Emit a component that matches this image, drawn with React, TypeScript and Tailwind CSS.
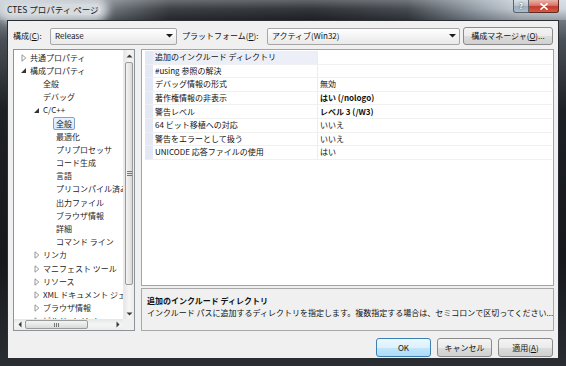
import React from 'react';

type TreeNode = {
  label: string;
  level: number;
  arrow?: 'open' | 'closed';
  selected?: boolean;
};

const treeNodes: TreeNode[] = [
  { label: '共通プロパティ', level: 0, arrow: 'closed' },
  { label: '構成プロパティ', level: 0, arrow: 'open' },
  { label: '全般', level: 1 },
  { label: 'デバッグ', level: 1 },
  { label: 'C/C++', level: 1, arrow: 'open' },
  { label: '全般', level: 2, selected: true },
  { label: '最適化', level: 2 },
  { label: 'プリプロセッサ', level: 2 },
  { label: 'コード生成', level: 2 },
  { label: '言語', level: 2 },
  { label: 'プリコンパイル済みヘッダー', level: 2 },
  { label: '出力ファイル', level: 2 },
  { label: 'ブラウザ情報', level: 2 },
  { label: '詳細', level: 2 },
  { label: 'コマンド ライン', level: 2 },
  { label: 'リンカ', level: 1, arrow: 'closed' },
  { label: 'マニフェスト ツール', level: 1, arrow: 'closed' },
  { label: 'リソース', level: 1, arrow: 'closed' },
  { label: 'XML ドキュメント ジェネレーター', level: 1, arrow: 'closed' },
  { label: 'ブラウザ情報', level: 1, arrow: 'closed' },
  { label: 'ビルド イベント', level: 1, arrow: 'closed' },
];

type PropRow = { name: string; value: string; bold?: boolean; active?: boolean };

const propRows: PropRow[] = [
  { name: '追加のインクルード ディレクトリ', value: '', active: true },
  { name: '#using 参照の解決', value: '' },
  { name: 'デバッグ情報の形式', value: '無効' },
  { name: '著作権情報の非表示', value: 'はい (/nologo)', bold: true },
  { name: '警告レベル', value: 'レベル 3 (/W3)', bold: true },
  { name: '64 ビット移植への対応', value: 'いいえ' },
  { name: '警告をエラーとして扱う', value: 'いいえ' },
  { name: 'UNICODE 応答ファイルの使用', value: 'はい' },
];

const levelPad = ['pl-[3px]', 'pl-[16px]', 'pl-[29px]'];

const TreeArrow: React.FC<{ kind?: 'open' | 'closed' }> = ({ kind }) => (
  <span className="w-[13px] h-full flex items-center justify-center shrink-0">
    {kind === 'closed' && (
      <svg width="6" height="8" viewBox="0 0 6 8">
        <polygon points="1,0.8 4.8,4 1,7.2" fill="#fff" stroke="#8c8c8c" strokeWidth="0.9" />
      </svg>
    )}
    {kind === 'open' && (
      <svg width="7" height="7" viewBox="0 0 7 7">
        <polygon points="6,1 6,6 1,6" fill="#333" />
      </svg>
    )}
  </span>
);

const DownCaret = () => (
  <svg width="7" height="4" viewBox="0 0 7 4">
    <polygon points="0,0 7,0 3.5,3.5" fill="#1a1a1a" />
  </svg>
);

const ComboBox: React.FC<{ text: string; className: string }> = ({ text, className }) => (
  <div
    className={`${className} h-[17px] flex items-center border border-[#a7a7a7] rounded-[2px] bg-[linear-gradient(180deg,#ffffff_0%,#f3f3f3_50%,#e9e9e9_100%)] pl-[4px] pr-[3px]`}
  >
    <span className="flex-1 whitespace-nowrap">{text}</span>
    <DownCaret />
  </div>
);

const WinButton: React.FC<{ children: React.ReactNode; className: string; isDefault?: boolean }> = ({
  children,
  className,
  isDefault,
}) => (
  <div
    className={`${className} flex items-center justify-center rounded-[3px] border ${
      isDefault
        ? 'border-[#3c7fb1] bg-[linear-gradient(180deg,#ecf7fd_0%,#dcf1fc_50%,#c1e6fb_51%,#aedcf5_100%)]'
        : 'border-[#8a8a8a] bg-[linear-gradient(180deg,#f4f4f4_0%,#ebebeb_50%,#dcdcdc_51%,#d0d0d0_100%)]'
    }`}
  >
    {children}
  </div>
);

const ScrollArrow: React.FC<{ dir: 'up' | 'down' | 'left' | 'right' }> = ({ dir }) => {
  const pts = {
    up: '0.5,3.5 3.5,0.5 6.5,3.5',
    down: '0.5,0.5 6.5,0.5 3.5,3.5',
    left: '3.5,0.5 3.5,6.5 0.5,3.5',
    right: '0.5,0.5 0.5,6.5 3.5,3.5',
  }[dir];
  const vertical = dir === 'up' || dir === 'down';
  return (
    <svg width={vertical ? 7 : 4} height={vertical ? 4 : 7} viewBox={vertical ? '0 0 7 4' : '0 0 4 7'}>
      <polygon points={pts} fill="#3a3a3a" />
    </svg>
  );
};

export default function App() {
  return (
    <div className="w-[566px] h-[366px] flex flex-col overflow-hidden font-['Noto_Sans_CJK_JP',sans-serif] text-[8px] text-[#111] bg-[linear-gradient(180deg,#9aa2aa_0px,#4a5057_40px,#1d2024_110px,#16181b_260px,#2a2e33_100%)]">
      {/* title bar */}
      <div className="h-[20px] shrink-0 flex items-start bg-[linear-gradient(180deg,rgba(255,255,255,0.28)_0%,rgba(255,255,255,0.06)_45%,rgba(0,0,0,0.25)_100%),linear-gradient(90deg,#b9c1c9_0%,#6f767e_18%,#30353a_30%,#262a2f_55%,#3b4148_72%,#8e98a2_84%,#c4ccd4_92%,#ccd4dc_100%)]">
        <span className="ml-[5px] mt-[4px] px-[2px] text-[8.5px] leading-[11px] text-[#15191d] whitespace-nowrap bg-[#d6dbe0] rounded-[6px] shadow-[0_0_8px_7px_rgba(214,219,224,0.95)]">
          CTES プロパティ ページ
        </span>
        <div className="ml-auto mr-[7px] flex items-start">
          <div className="w-[16px] h-[13px] flex items-center justify-center rounded-bl-[3px] border border-t-0 border-[#5a636c] bg-[linear-gradient(180deg,#d8e0e8_0%,#b7c3cf_50%,#9fadbb_51%,#aebccb_100%)] text-[8px] leading-none font-bold text-white [text-shadow:0_0_2px_#333]">
            ?
          </div>
          <div className="w-[30px] h-[13px] flex items-center justify-center rounded-br-[3px] border border-t-0 border-l-0 border-[#5e2a24] bg-[linear-gradient(180deg,#eab3a9_0%,#d8766a_45%,#c5392c_55%,#d65a40_100%)]">
            <svg width="8" height="7" viewBox="0 0 8 7">
              <path d="M1 0.8 L7 6.2 M7 0.8 L1 6.2" stroke="#fff" strokeWidth="1.6" strokeLinecap="round" />
            </svg>
          </div>
        </div>
      </div>

      {/* client area */}
      <div className="flex-1 mx-[7px] mb-[7px] border border-[#2a2e33] bg-[#f0f0f0] flex flex-col pt-[6px] px-[5px] pb-[1px]">
        {/* toolbar */}
        <div className="h-[18px] shrink-0 flex items-center">
          <span className="w-[37px] whitespace-nowrap">
            構成(<span className="underline">C</span>):
          </span>
          <ComboBox className="w-[127px]" text="Release" />
          <span className="ml-[5px] w-[85px] whitespace-nowrap">
            プラットフォーム(<span className="underline">P</span>):
          </span>
          <ComboBox className="w-[193px]" text="アクティブ(Win32)" />
          <WinButton className="ml-[3px] w-[90px] h-[18px]">
            <span className="whitespace-nowrap">
              構成マネージャ(<span className="underline">O</span>)...
            </span>
          </WinButton>
        </div>

        {/* panels */}
        <div className="mt-[4px] h-[282px] shrink-0 flex gap-[6px]">
          {/* tree */}
          <div className="w-[122px] border border-[#8e939b] bg-white flex flex-col">
            <div className="flex-1 flex min-h-0">
              <div className="flex-1 overflow-hidden pt-[1px] text-[#1e1e1e]">
                {treeNodes.map((node, i) => (
                  <div key={i} className={`h-[13.2px] flex items-center whitespace-nowrap ${levelPad[node.level]}`}>
                    <TreeArrow kind={node.arrow} />
                    {node.selected ? (
                      <span className="-ml-[3px] px-[2px] leading-[11px] border border-[#7da2ce] rounded-[2px] bg-[linear-gradient(180deg,#ebf4fd_0%,#d5e7fa_100%)]">
                        {node.label}
                      </span>
                    ) : (
                      <span>{node.label}</span>
                    )}
                  </div>
                ))}
              </div>
              <div className="w-[11px] flex flex-col bg-[linear-gradient(90deg,#e6e6e6_0%,#f5f5f5_50%,#ececec_100%)] border-l border-[#eaeaea]">
                <div className="h-[11px] flex items-center justify-center">
                  <ScrollArrow dir="up" />
                </div>
                <div className="mt-[1px] h-[223px] mx-[1px] rounded-[2px] border border-[#9a9a9a] bg-[linear-gradient(90deg,#f3f3f3_0%,#e8e8e8_50%,#d8d8d8_100%)] flex items-center justify-center">
                  <div className="flex flex-col gap-[1px]">
                    <div className="w-[5px] h-px bg-[#777]" />
                    <div className="w-[5px] h-px bg-[#777]" />
                    <div className="w-[5px] h-px bg-[#777]" />
                  </div>
                </div>
                <div className="flex-1" />
                <div className="h-[11px] flex items-center justify-center">
                  <ScrollArrow dir="down" />
                </div>
              </div>
            </div>
            <div className="h-[11px] shrink-0 flex">
              <div className="flex-1 flex items-center bg-[linear-gradient(180deg,#e6e6e6_0%,#f5f5f5_50%,#ececec_100%)]">
                <div className="w-[11px] h-full flex items-center justify-center">
                  <ScrollArrow dir="left" />
                </div>
                <div className="w-[63px] h-[9px] rounded-[2px] border border-[#9a9a9a] bg-[linear-gradient(180deg,#f3f3f3_0%,#e8e8e8_50%,#d8d8d8_100%)] flex items-center justify-center">
                  <div className="flex gap-[1px]">
                    <div className="w-px h-[4px] bg-[#777]" />
                    <div className="w-px h-[4px] bg-[#777]" />
                    <div className="w-px h-[4px] bg-[#777]" />
                  </div>
                </div>
                <div className="flex-1" />
                <div className="w-[11px] h-full flex items-center justify-center">
                  <ScrollArrow dir="right" />
                </div>
              </div>
              <div className="w-[11px] bg-[#f0f0f0]" />
            </div>
          </div>

          {/* property grid + description */}
          <div className="flex-1 flex flex-col gap-[2px]">
            <div className="h-[237px] shrink-0 border border-[#a3a3a3] bg-white pt-[1px] pl-[3px] pr-[1px]">
              {propRows.map((row, i) => (
                <div key={i} className="h-[13.6px] flex border-b border-[#f0f0f0]">
                  <div className="w-[8px] bg-[#e4e8f4]" />
                  <div
                    className={`w-[165px] flex items-center pl-[2px] whitespace-nowrap border-r border-[#ececec] ${
                      row.active ? 'bg-[#eceef8]' : ''
                    }`}
                  >
                    {row.name}
                  </div>
                  <div className={`flex-1 flex items-center pl-[2px] whitespace-nowrap ${row.bold ? 'font-bold' : ''}`}>
                    {row.value}
                  </div>
                </div>
              ))}
            </div>
            <div className="flex-1 border border-[#a8a8a8] bg-[#f0f0f0] pl-[5px] pt-[5px] flex flex-col">
              <div className="h-[13px] flex items-center font-bold whitespace-nowrap">追加のインクルード ディレクトリ</div>
              <div className="h-[12px] flex items-center whitespace-nowrap">
                インクルード パスに追加するディレクトリを指定します。複数指定する場合は、セミコロンで区切ってください...
              </div>
            </div>
          </div>
        </div>

        {/* dialog buttons */}
        <div className="mt-[7px] h-[19px] shrink-0 flex justify-end gap-[6px]">
          <WinButton className="w-[55px] h-full" isDefault>
            OK
          </WinButton>
          <WinButton className="w-[55px] h-full">キャンセル</WinButton>
          <WinButton className="w-[55px] h-full">
            <span>
              適用(<span className="underline">A</span>)
            </span>
          </WinButton>
        </div>
      </div>
    </div>
  );
}
